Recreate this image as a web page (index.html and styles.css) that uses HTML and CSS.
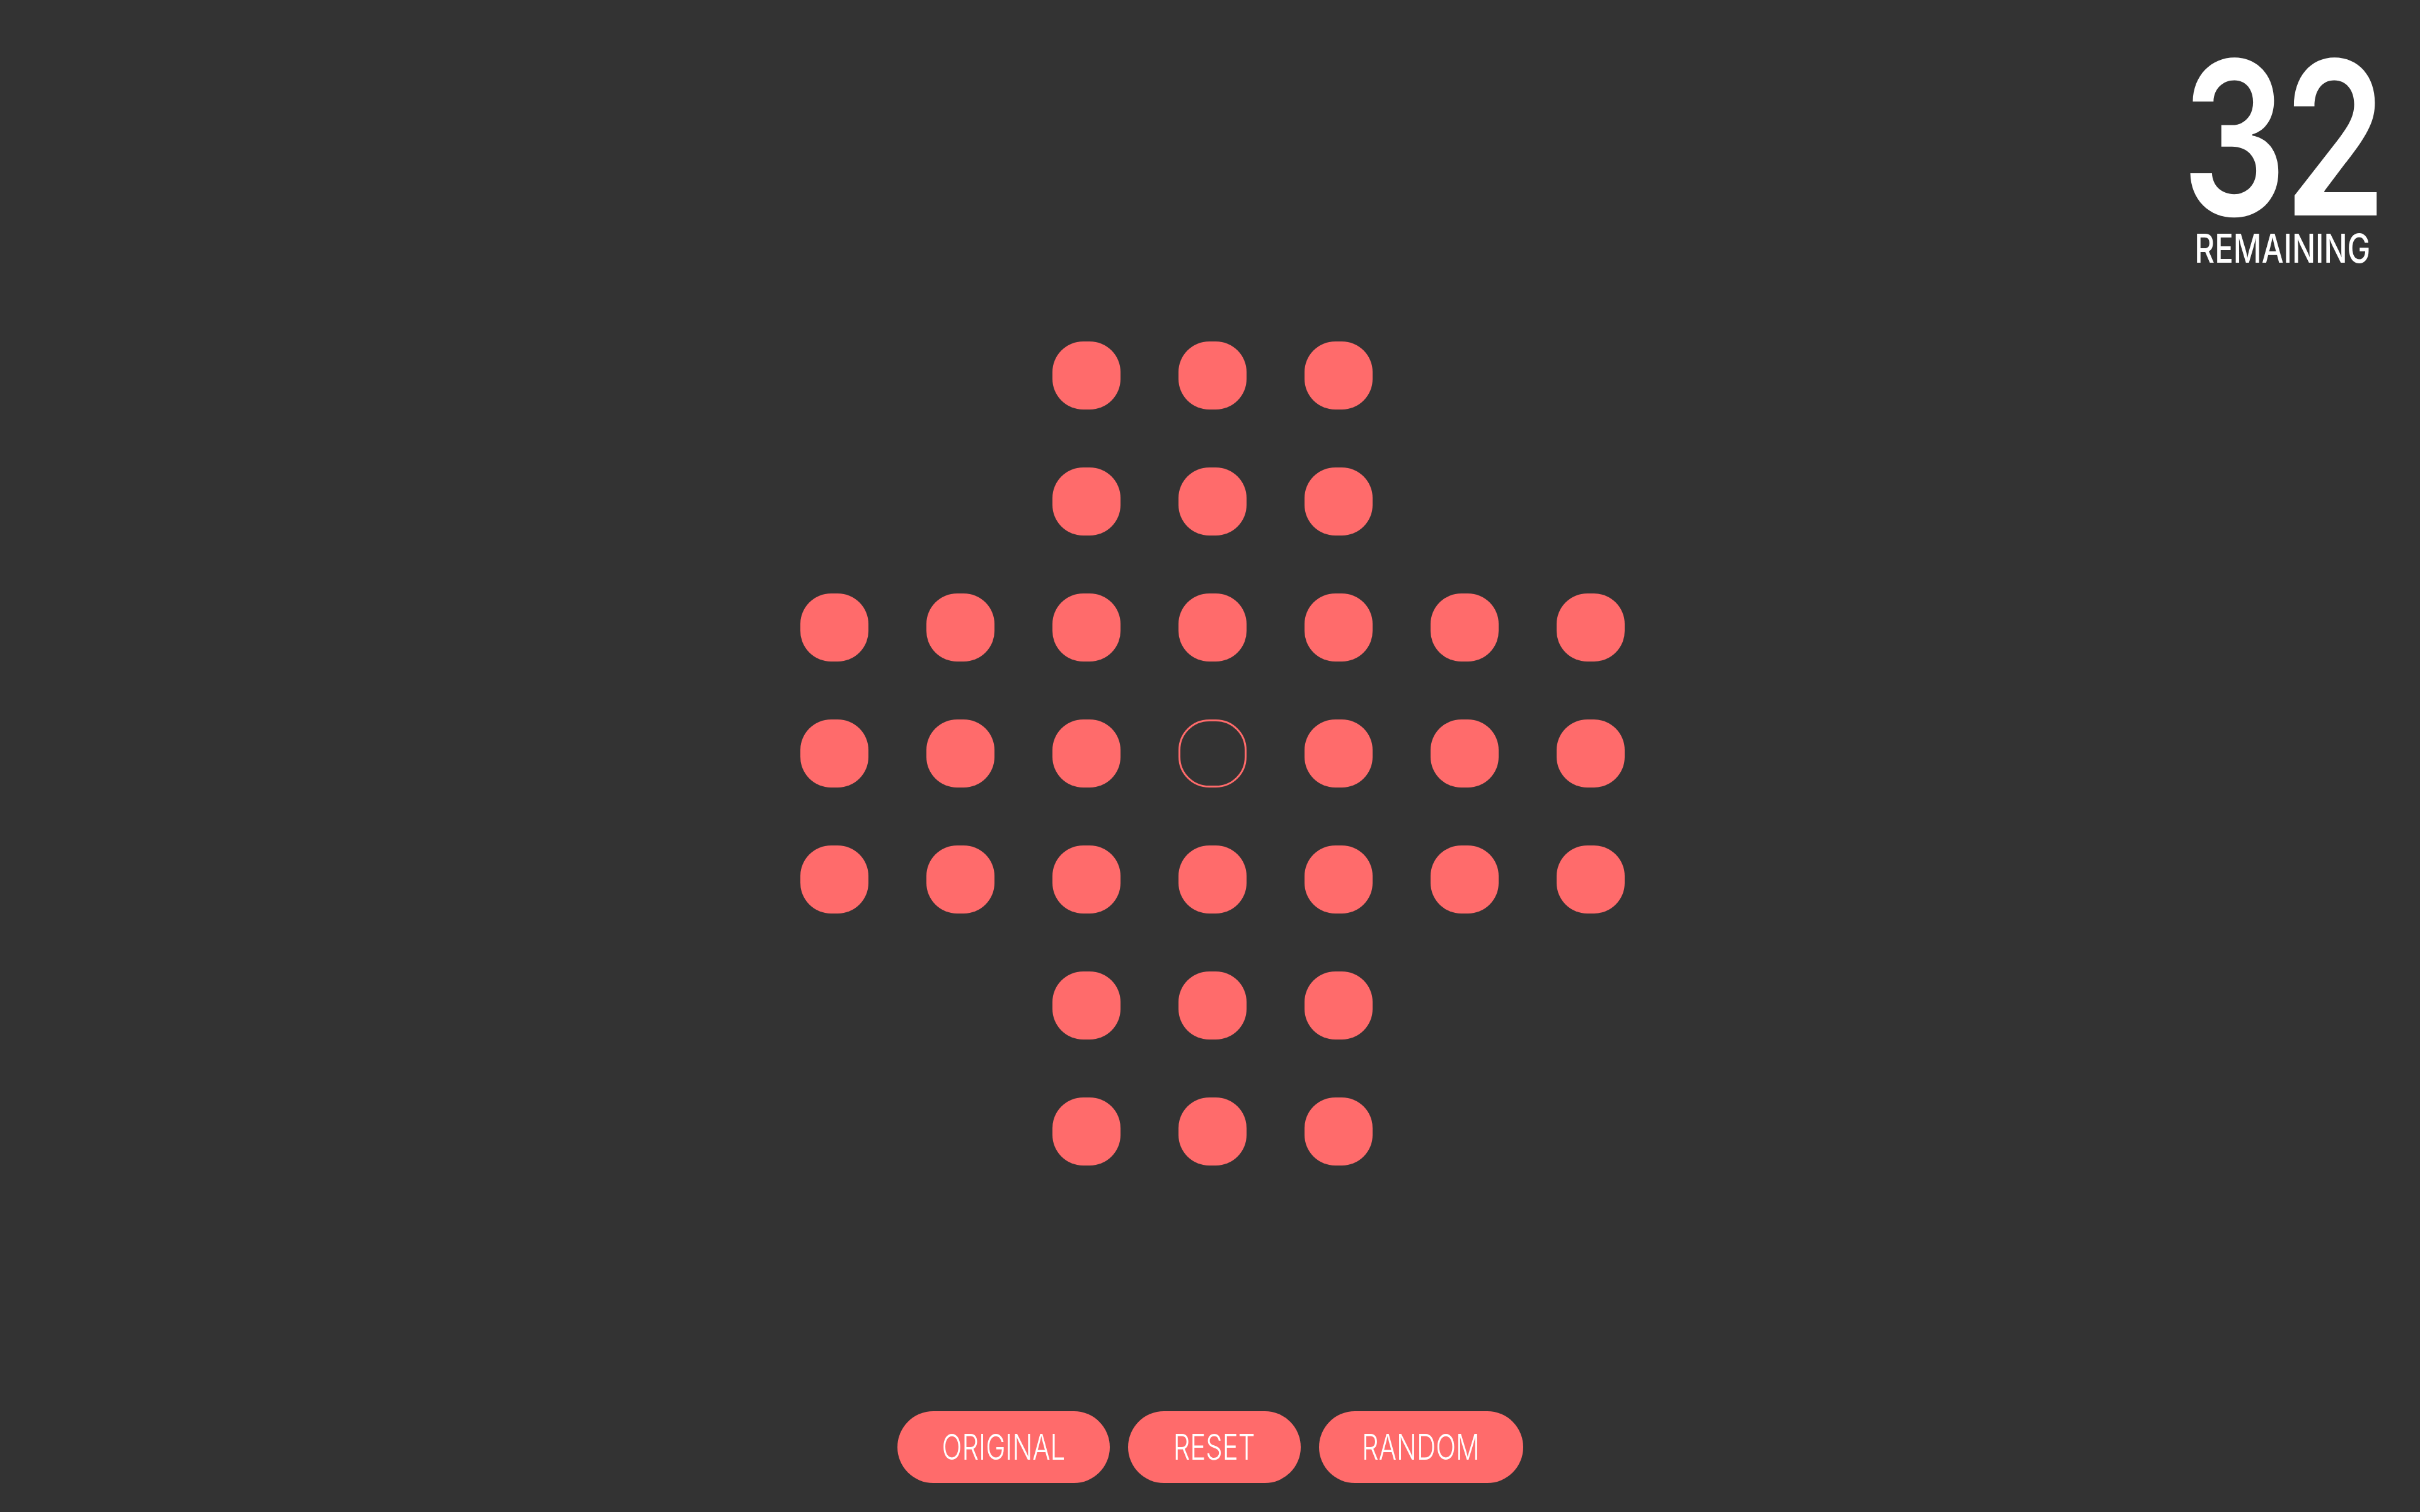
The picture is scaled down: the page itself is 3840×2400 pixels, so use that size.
FILE: index.html
```html
<!DOCTYPE html>
<html lang="en">
<head>
<meta charset="utf-8">
<title>Peg Solitaire</title>
<link rel="stylesheet" href="styles.css">
</head>
<body>
<div class="app">
  <header class="top">
    <div class="counter">
      <div class="count"><span>32</span></div>
      <div class="label"><span>REMAINING</span></div>
    </div>
  </header>
  <main class="board">
    <div class="cell"></div><div class="cell"></div><div class="peg"></div><div class="peg"></div><div class="peg"></div><div class="cell"></div><div class="cell"></div>
    <div class="cell"></div><div class="cell"></div><div class="peg"></div><div class="peg"></div><div class="peg"></div><div class="cell"></div><div class="cell"></div>
    <div class="peg"></div><div class="peg"></div><div class="peg"></div><div class="peg"></div><div class="peg"></div><div class="peg"></div><div class="peg"></div>
    <div class="peg"></div><div class="peg"></div><div class="peg"></div><div class="peg empty"></div><div class="peg"></div><div class="peg"></div><div class="peg"></div>
    <div class="peg"></div><div class="peg"></div><div class="peg"></div><div class="peg"></div><div class="peg"></div><div class="peg"></div><div class="peg"></div>
    <div class="cell"></div><div class="cell"></div><div class="peg"></div><div class="peg"></div><div class="peg"></div><div class="cell"></div><div class="cell"></div>
    <div class="cell"></div><div class="cell"></div><div class="peg"></div><div class="peg"></div><div class="peg"></div><div class="cell"></div><div class="cell"></div>
  </main>
  <footer class="controls">
    <button class="btn btn-original"><span>ORIGINAL</span></button>
    <button class="btn btn-reset"><span>RESET</span></button>
    <button class="btn btn-random"><span>RANDOM</span></button>
  </footer>
</div>
</body>
</html>
```

FILE: styles.css
```css
html, body {
  margin: 0;
  padding: 0;
  background: #333333;
}

.app {
  height: 100vh;
  box-sizing: border-box;
  padding-bottom: 8px;
  display: grid;
  grid-template-rows: 1fr auto 1fr;
  font-family: Inter, "Noto Sans", sans-serif;
  color: #ffffff;
}

.top {
  display: flex;
  justify-content: flex-end;
  align-items: flex-start;
}

.counter {
  width: 300px;
  margin-right: 68px;
  display: flex;
  flex-direction: column;
  align-items: center;
}

.count {
  font-size: 340px;
  line-height: 0.8;
  font-weight: 600;
  margin-top: 83px;
  white-space: nowrap;
}

.count span {
  display: inline-block;
  transform: scaleX(0.77);
  letter-spacing: -6px;
}

.label {
  font-size: 63px;
  line-height: 1;
  font-weight: 500;
  margin-top: 8px;
  white-space: nowrap;
}

.label span {
  display: inline-block;
  transform: scaleX(0.78);
}

.board {
  justify-self: center;
  margin-left: 8px;
  display: grid;
  grid-template-columns: repeat(7, 108px);
  grid-auto-rows: 108px;
  gap: 92px;
}

.peg {
  background: #ff6b6b;
  border-radius: 45%;
}

.peg.empty {
  background: transparent;
  border: 3px solid #ff6b6b;
  box-sizing: border-box;
}

.controls {
  display: flex;
  justify-content: center;
  align-items: flex-end;
  gap: 29px;
  padding-bottom: 38px;
}

.btn {
  height: 114px;
  border: none;
  border-radius: 57px;
  background: #ff6b6b;
  color: #ffffff;
  font-family: Inter, "Noto Sans", sans-serif;
  font-weight: 300;
  font-size: 56px;
  line-height: 1;
  padding: 0;
  display: flex;
  align-items: center;
  justify-content: center;
  white-space: nowrap;
}

.btn span {
  display: inline-block;
  transform: scaleX(0.75);
}

.btn-original { width: 337px; }
.btn-reset { width: 274px; }
.btn-random { width: 324px; }
```
